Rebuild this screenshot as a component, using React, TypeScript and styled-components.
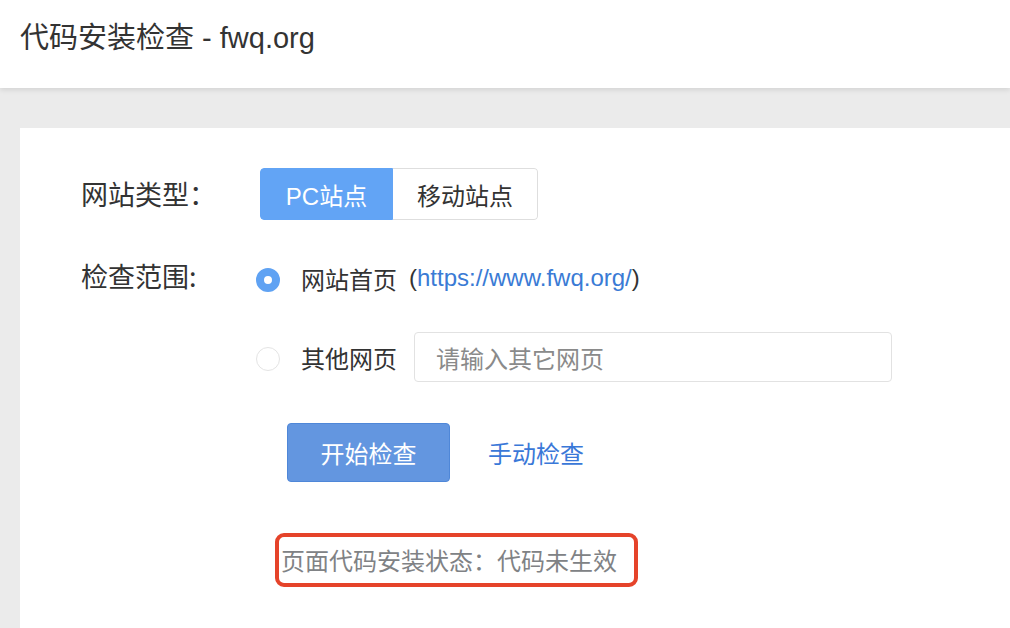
import styled, { createGlobalStyle } from "styled-components";

const GlobalStyle = createGlobalStyle`
  html, body {
    margin: 0;
    padding: 0;
    height: 100%;
    background: #ebebeb;
    overflow: hidden;
  }
  body {
    font-family: "Liberation Sans", "Noto Sans CJK SC", sans-serif;
    color: #333;
  }
  #root {
    min-height: 100vh;
  }
`;

const Page = styled.div`
  display: flex;
  flex-direction: column;
  min-height: 100vh;
`;

const Header = styled.header`
  height: 88px;
  box-sizing: border-box;
  padding: 24px 0 0 20px;
  background: #fff;
  box-shadow: 0 2px 5px rgba(0, 0, 0, 0.1);
  position: relative;
  z-index: 1;
`;

const Title = styled.h1`
  margin: 0;
  font-size: 29px;
  line-height: 29px;
  font-weight: 400;
  color: #333;
`;

const Card = styled.main`
  flex: 1;
  margin: 40px 0 0 20px;
  padding: 40px 0 0 61px;
  background: #fff;
  display: flex;
  flex-direction: column;
`;

const Row = styled.div<{ $align?: string; $gap?: number }>`
  display: flex;
  align-items: ${p => p.$align || "center"};
  margin-top: ${p => p.$gap || 0}px;
`;

const Label = styled.div<{ $width: number }>`
  width: ${p => p.$width}px;
  flex: none;
  font-size: 27px;
  line-height: 46px;
  color: #333;
  font-family: "Noto Sans CJK SC", sans-serif;
`;

const Segmented = styled.div`
  display: flex;
  height: 52px;
  border-radius: 4px;
  overflow: hidden;
`;

const Segment = styled.button<{ $active?: boolean; $width: number }>`
  width: ${p => p.$width}px;
  height: 52px;
  box-sizing: border-box;
  font-family: "Liberation Sans", "Noto Sans CJK SC", sans-serif;
  font-size: 24px;
  border: 1.5px solid ${p => (p.$active ? "#62a4f5" : "#dedede")};
  border-left-width: ${p => (p.$active ? "1.5px" : "0")};
  border-radius: ${p => (p.$active ? "4px 0 0 4px" : "0 4px 4px 0")};
  background: ${p => (p.$active ? "#62a4f5" : "#fff")};
  color: ${p => (p.$active ? "#fff" : "#333")};
  padding: 0;
  cursor: pointer;
`;

const Options = styled.div`
  display: flex;
  flex-direction: column;
  gap: 29px;
`;

const Option = styled.label`
  display: flex;
  align-items: center;
  height: 50px;
  font-size: 24px;
  color: #333;
`;

const Radio = styled.span<{ $checked?: boolean }>`
  width: 24px;
  height: 24px;
  flex: none;
  box-sizing: border-box;
  border-radius: 50%;
  margin-right: 21px;
  background: #fff;
  border: ${p => (p.$checked ? "8px solid #5fa2f3" : "1.5px solid #e4e4e4")};
  position: relative;
  top: 2px;
`;

const Url = styled.a`
  margin-left: 12px;
  color: #333;
  text-decoration: none;
  span {
    color: #3a7bd5;
  }
`;

const TextInput = styled.input`
  margin-left: 17px;
  width: 478px;
  height: 50px;
  box-sizing: border-box;
  border: 1.5px solid #e2e2e2;
  border-radius: 4px;
  padding: 0 0 0 21px;
  font-family: "Noto Sans CJK SC", sans-serif;
  font-size: 24px;
  color: #333;
  outline: none;
  &::placeholder {
    color: #8a8a8a;
  }
`;

const Actions = styled.div`
  display: flex;
  align-items: center;
  margin: 41px 0 0 206px;
  gap: 38px;
`;

const PrimaryButton = styled.button`
  width: 163px;
  height: 59px;
  border: 1px solid #4f87d8;
  border-radius: 4px;
  background: #6396e0;
  color: #fff;
  font-family: "Noto Sans CJK SC", sans-serif;
  font-size: 24px;
  cursor: pointer;
`;

const TextLink = styled.a`
  color: #3a78d8;
  font-size: 24px;
  font-family: "Noto Sans CJK SC", sans-serif;
  text-decoration: none;
`;

const Status = styled.div`
  align-self: flex-start;
  margin: 51px 0 0 194px;
  border: 4px solid #e5432a;
  border-radius: 9px;
  padding: 0 17px 0 2px;
  height: 54px;
  box-sizing: border-box;
  line-height: 46px;
  font-size: 24px;
  color: #808285;
  font-family: "Noto Sans CJK SC", sans-serif;
`;

export default function App() {
  return (
    <Page>
      <GlobalStyle />
      <Header>
        <Title>代码安装检查 - fwq.org</Title>
      </Header>
      <Card>
        <Row>
          <Label $width={179}>网站类型：</Label>
          <Segmented>
            <Segment $active $width={133}>PC站点</Segment>
            <Segment $width={145}>移动站点</Segment>
          </Segmented>
        </Row>
        <Row $align="flex-start" $gap={33}>
          <Label $width={175}>检查范围:</Label>
          <Options>
            <Option>
              <Radio $checked />
              网站首页
              <Url href="#">
                (<span>https://www.fwq.org/</span>)
              </Url>
            </Option>
            <Option>
              <Radio />
              其他网页
              <TextInput placeholder="请输入其它网页" />
            </Option>
          </Options>
        </Row>
        <Actions>
          <PrimaryButton>开始检查</PrimaryButton>
          <TextLink href="#">手动检查</TextLink>
        </Actions>
        <Status>页面代码安装状态：代码未生效</Status>
      </Card>
    </Page>
  );
}
